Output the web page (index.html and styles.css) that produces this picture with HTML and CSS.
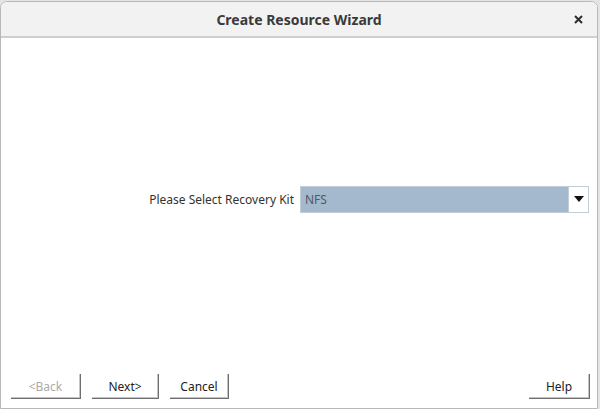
FILE: index.html
```html
<!DOCTYPE html>
<html>
<head>
<meta charset="utf-8">
<link rel="stylesheet" href="styles.css">
</head>
<body>
<div class="window">
  <div class="titlebar">
    <span class="title">Create Resource Wizard</span>
    <svg class="close" width="9" height="9" viewBox="0 0 9 9"><path d="M1 1L8 8M8 1L1 8" stroke="#2e2e2e" stroke-width="2"/></svg>
  </div>
  <div class="content">
    <div class="row">
      <span class="label">Please Select Recovery Kit</span>
      <div class="combo">
        <span class="value">NFS</span>
        <span class="arrow"><svg width="10" height="6" viewBox="0 0 10 6"><path d="M0 0H10L5 6Z" fill="#111"/></svg></span>
      </div>
    </div>
  </div>
  <div class="footer">
    <button class="btn disabled">&lt;Back</button>
    <button class="btn">Next&gt;</button>
    <button class="btn">Cancel</button>
    <span class="spacer"></span>
    <button class="btn">Help</button>
  </div>
</div>
</body>
</html>
```
FILE: styles.css
```css
html, body {
  margin: 0;
  padding: 0;
}
body {
  width: 600px;
  height: 409px;
  background: #e4e4e4;
  font-family: "Noto Sans", "Open Sans", sans-serif;
  overflow: hidden;
}
.window {
  box-sizing: border-box;
  width: 598px;
  height: 408px;
  margin-top: 1px;
  border: 1px solid #b8b8b8;
  border-radius: 7px 7px 0 0;
  background: #fff;
  display: flex;
  flex-direction: column;
  overflow: hidden;
}
.titlebar {
  height: 34px;
  flex: none;
  background: #f2f2f2;
  border-bottom: 2px solid #cfcfcf;
  display: flex;
  align-items: center;
  justify-content: center;
  position: relative;
}
.title {
  font-size: 14px;
  font-weight: bold;
  color: #3a3a3a;
}
.close {
  position: absolute;
  right: 14px;
  top: 13px;
}
.content {
  flex: 1;
  display: flex;
  align-items: center;
  justify-content: flex-end;
  padding-right: 8px;
  padding-bottom: 14px;
}
.row {
  display: flex;
  align-items: center;
  gap: 6px;
}
.label {
  font-size: 12px;
  color: #333;
}
.combo {
  box-sizing: border-box;
  width: 289px;
  height: 27px;
  background: #a4b9cd;
  border: 1px solid #c4ccd4;
  display: flex;
  align-items: center;
}
.value {
  flex: 1;
  font-size: 12px;
  color: #4f5a66;
  padding-left: 4px;
}
.arrow {
  width: 19px;
  height: 25px;
  background: #fff;
  border-left: 1px solid #c4ccd4;
  display: flex;
  align-items: center;
  justify-content: center;
}
.footer {
  flex: none;
  display: flex;
  align-items: center;
  gap: 11px;
  padding: 0 7px 9px 10px;
}
.spacer {
  flex: 1;
}
.btn {
  box-sizing: border-box;
  height: 25px;
  padding: 0;
  margin: 0;
  border: none;
  border-right: 1px solid #6e6e6e;
  border-bottom: 1px solid #6e6e6e;
  box-shadow: inset -1px -1px 0 #c4c4c4;
  background: #fff;
  font-family: "Noto Sans", "Open Sans", sans-serif;
  font-size: 12px;
  color: #222;
  width: 68px;
}
.btn:nth-child(2) { width: 67px; }
.btn:nth-child(3) { width: 59px; }
.btn:last-child { width: 61px; }
.btn.disabled {
  width: 70px;
  color: #aaa;
}
```
